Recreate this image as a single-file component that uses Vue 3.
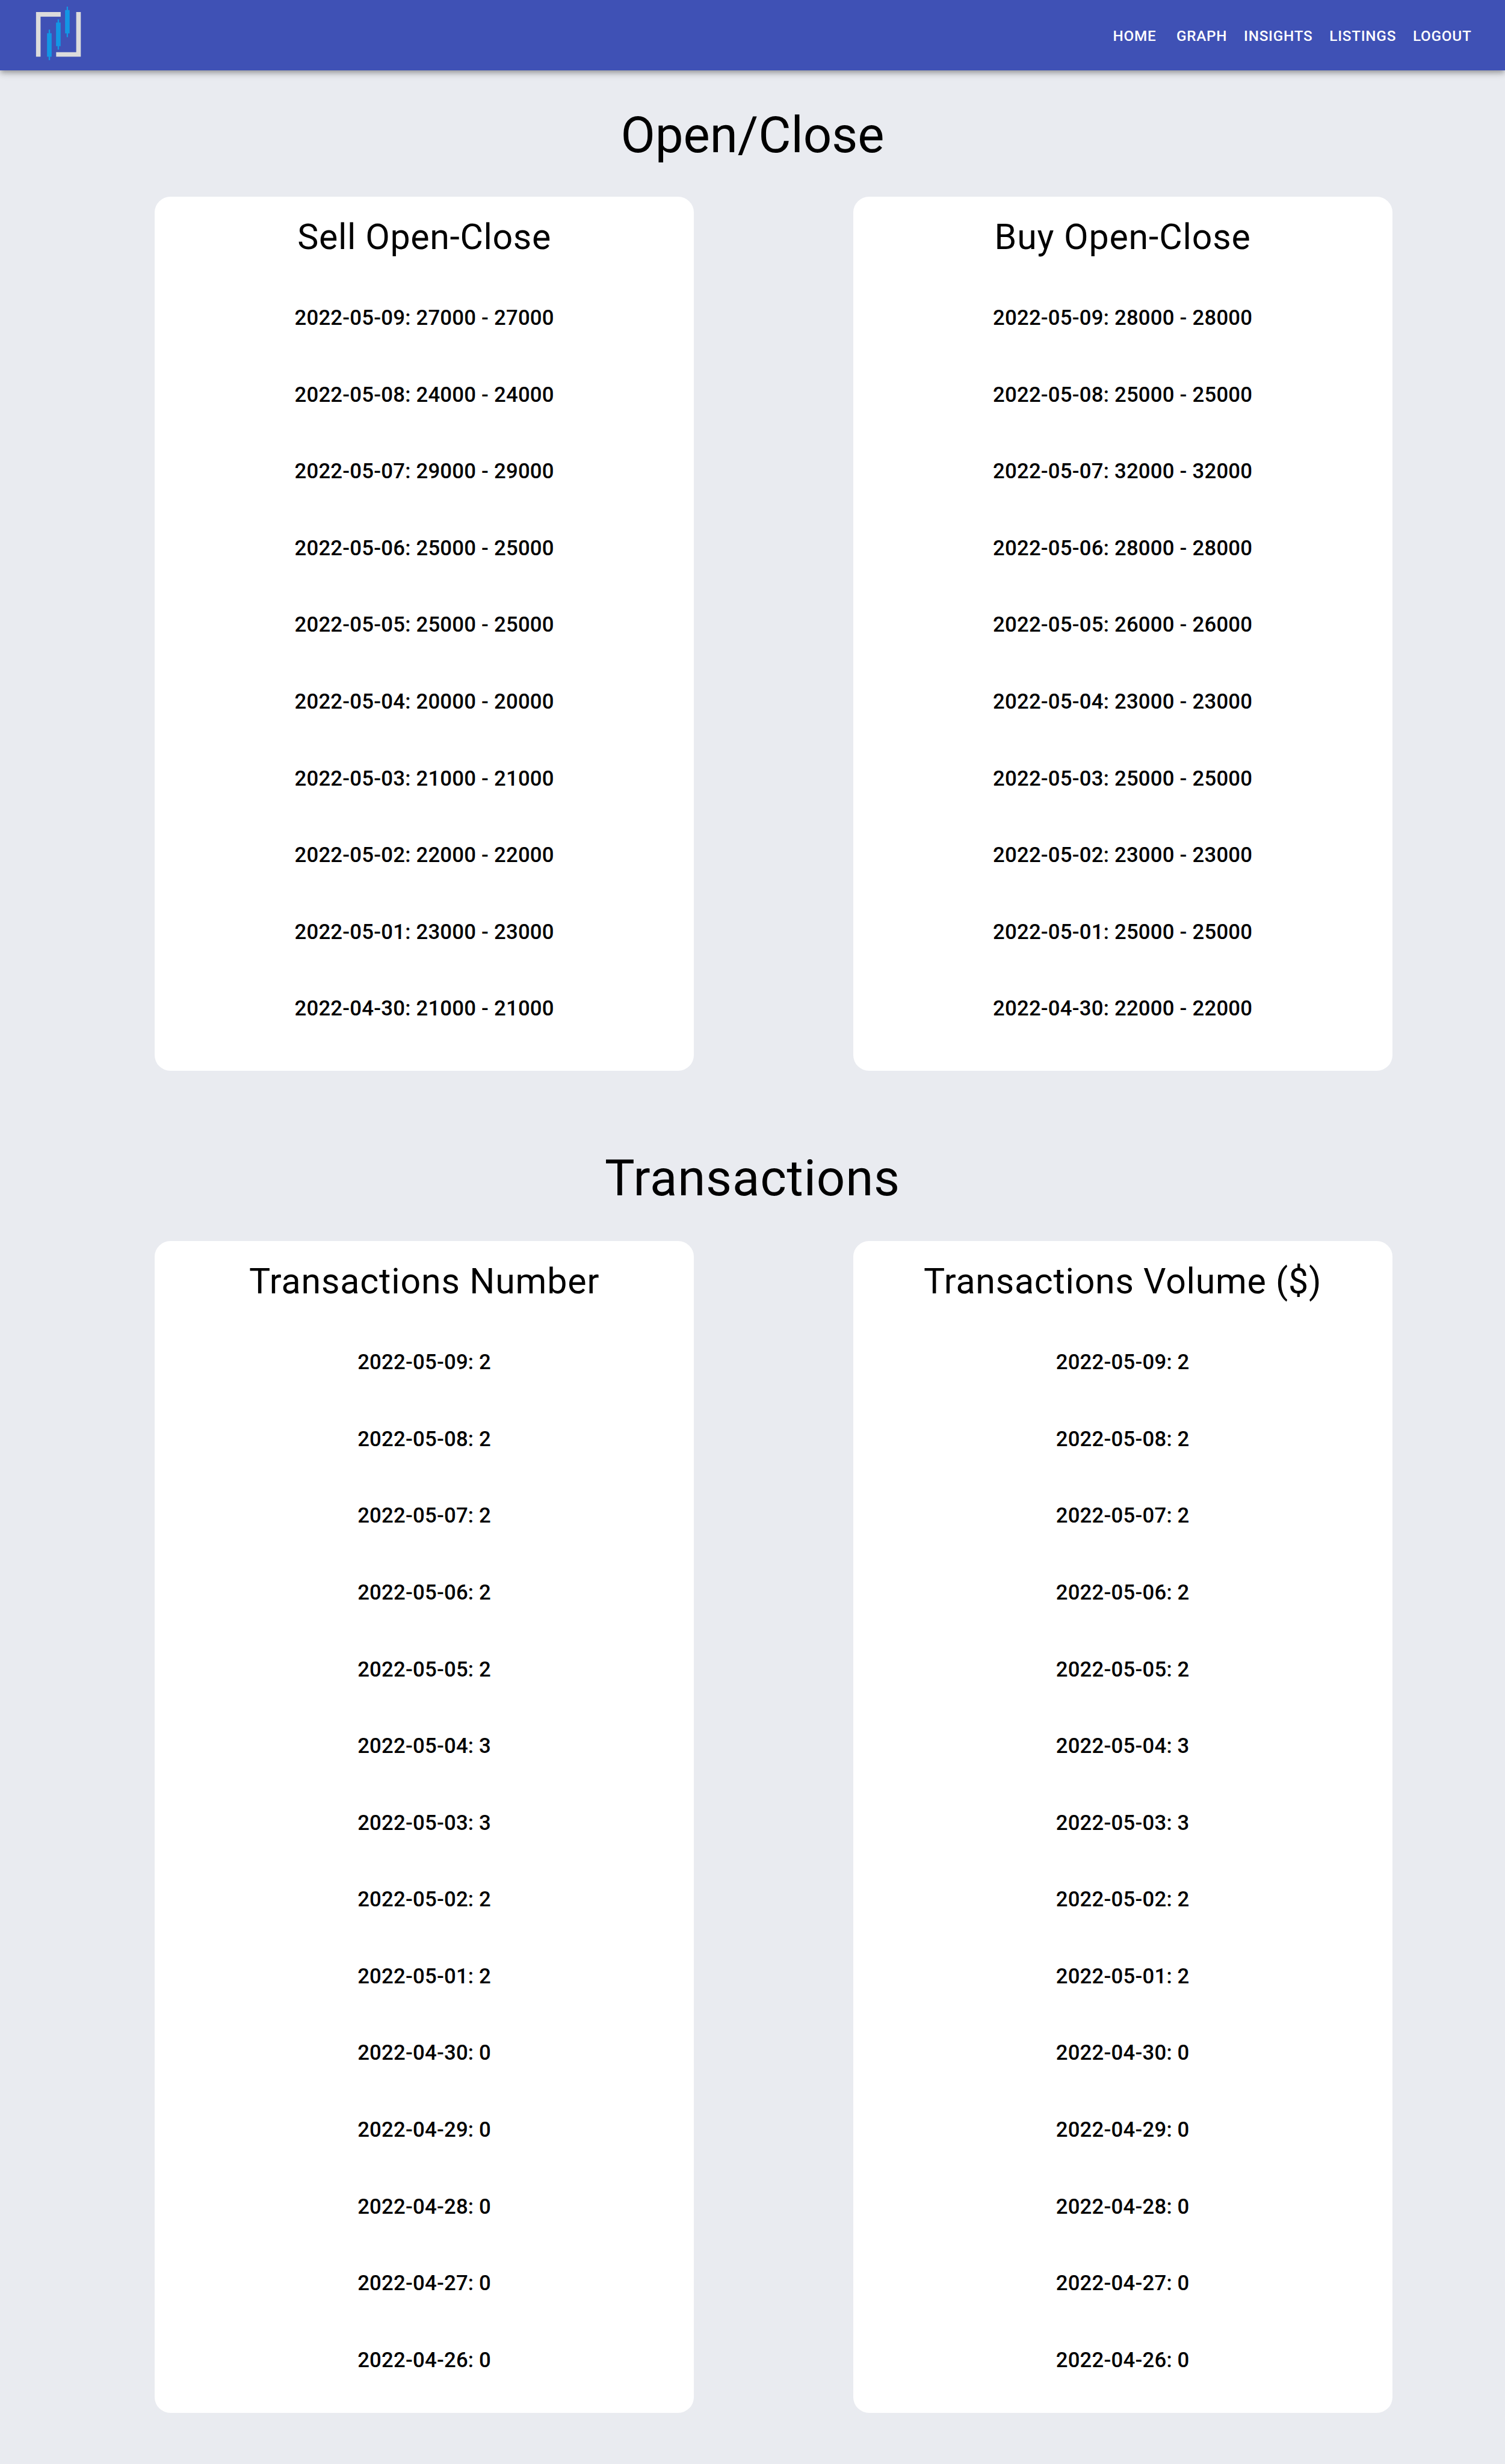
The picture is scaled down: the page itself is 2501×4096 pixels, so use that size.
<script setup>
const links = ['Home', 'Graph', 'Insights', 'Listings', 'Logout']

const sell = [
  ['2022-05-09', 27000], ['2022-05-08', 24000], ['2022-05-07', 29000],
  ['2022-05-06', 25000], ['2022-05-05', 25000], ['2022-05-04', 20000],
  ['2022-05-03', 21000], ['2022-05-02', 22000], ['2022-05-01', 23000],
  ['2022-04-30', 21000],
]
const buy = [
  ['2022-05-09', 28000], ['2022-05-08', 25000], ['2022-05-07', 32000],
  ['2022-05-06', 28000], ['2022-05-05', 26000], ['2022-05-04', 23000],
  ['2022-05-03', 25000], ['2022-05-02', 23000], ['2022-05-01', 25000],
  ['2022-04-30', 22000],
]
const counts = [
  ['2022-05-09', 2], ['2022-05-08', 2], ['2022-05-07', 2], ['2022-05-06', 2],
  ['2022-05-05', 2], ['2022-05-04', 3], ['2022-05-03', 3], ['2022-05-02', 2],
  ['2022-05-01', 2], ['2022-04-30', 0], ['2022-04-29', 0], ['2022-04-28', 0],
  ['2022-04-27', 0], ['2022-04-26', 0],
]

const range = (rows) => rows.map(([day, v]) => `${day}: ${v} - ${v}`)
const single = (rows) => rows.map(([day, v]) => `${day}: ${v}`)

const sections = [
  {
    id: 'prices',
    title: 'Open/Close',
    cards: [
      { id: 'sell', title: 'Sell Open-Close', rows: range(sell) },
      { id: 'buy', title: 'Buy Open-Close', rows: range(buy) },
    ],
  },
  {
    id: 'transactions',
    title: 'Transactions',
    cards: [
      { id: 'number', title: 'Transactions Number', rows: single(counts) },
      { id: 'volume', title: 'Transactions Volume ($)', rows: single(counts) },
    ],
  },
]
</script>

<template>
  <div class="page">
    <header class="bar">
      <svg class="logo" viewBox="66 0 92 135" aria-hidden="true">
        <g fill="#dcdcdc">
          <path d="M69.3 23H116.5V32H78V108.6H69.3Z" />
          <path d="M146.2 23H155V108.6H107.8V99.8H146.2Z" />
        </g>
        <g fill="#1297e5">
          <path d="M93.5 56.8H96.2V63.6H99.2V108.6H96.2V115.3H93.5V108.6H90.4V63.6H93.5Z" />
          <path d="M110.6 37H113.4V43.3H116.4V88.5H113.4V95H110.6V88.5H107.6V43.3H110.6Z" />
          <path d="M127.9 12.7H130.5V19.2H133.6V64H130.5V71H127.9V64H124.9V19.2H127.9Z" />
        </g>
      </svg>
      <nav class="nav">
        <a v-for="link in links" :key="link" class="link">{{ link }}</a>
      </nav>
    </header>

    <section v-for="s in sections" :key="s.id" :class="['section', s.id]">
      <h3 class="heading">{{ s.title }}</h3>
      <div class="cards">
        <article v-for="card in s.cards" :key="card.id" :class="['card', card.id]">
          <h4 class="title">{{ card.title }}</h4>
          <ul class="rows">
            <li v-for="row in card.rows" :key="row" class="row">{{ row }}</li>
          </ul>
        </article>
      </div>
    </section>
  </div>
</template>

<style>
html {
  font-size: 17.368px;
  background: #e9ebf0;
}
body {
  margin: 0;
}
</style>

<style scoped>
.page {
  height: 4096px;
  overflow: hidden;
  background: #e9ebf0;
  color: #000;
  font-family: Roboto, "Liberation Sans", sans-serif;
}
.bar {
  box-sizing: border-box;
  display: flex;
  align-items: center;
  justify-content: space-between;
  height: 6.75rem;
  padding: 0 2.4rem 0 3.3rem;
  background: #3f51b5;
  box-shadow:
    0 0.2rem 0.4rem -0.1rem rgba(0, 0, 0, 0.2),
    0 0.4rem 0.5rem 0 rgba(0, 0, 0, 0.14),
    0 0.1rem 1rem 0 rgba(0, 0, 0, 0.12);
}
.logo {
  display: block;
  width: 4.6rem;
  height: 6.75rem;
}
.nav {
  display: flex;
  padding-top: 0.17rem;
}
.link {
  box-sizing: border-box;
  min-width: 6.4rem;
  padding: 0.6rem 0.8rem;
  color: #fff;
  font-size: 1.4rem;
  font-weight: 500;
  line-height: 1.75;
  letter-spacing: 0.0305em;
  text-align: center;
  text-transform: uppercase;
}
.heading,
.title,
.rows {
  margin: 0;
  padding: 0;
}
.heading {
  font-size: 4.8rem;
  font-weight: 400;
  line-height: 1.167;
  text-align: center;
}
.prices {
  padding-top: 3.41rem;
}
.prices .heading {
  margin-bottom: 3.09rem;
}
.transactions {
  padding-top: 7.49rem;
}
.transactions .heading {
  margin-bottom: 3.2rem;
  letter-spacing: 0.0101em;
}
.cards {
  display: flex;
  gap: 15.22rem;
  padding-left: 14.8rem;
}
.card {
  box-sizing: border-box;
  width: 51.6rem;
  border-radius: 1.5rem;
  background: #fff;
  text-align: center;
}
.prices .card {
  height: 83.65rem;
  padding-top: 1.76rem;
}
.transactions .card {
  height: 112.15rem;
  padding-top: 1.785rem;
}
.title {
  margin-bottom: 1.97rem;
  font-size: 3.4rem;
  font-weight: 400;
  line-height: 1.235;
}
.sell .title {
  letter-spacing: 0.0108em;
}
.buy .title,
.number .title {
  letter-spacing: 0.0144em;
}
.volume .title {
  letter-spacing: 0.0128em;
}
.rows {
  list-style: none;
}
.row {
  display: flex;
  align-items: center;
  justify-content: center;
  height: 7.346rem;
  font-size: 2rem;
  font-weight: 500;
  line-height: 1.6;
  letter-spacing: 0.0065em;
}
</style>
